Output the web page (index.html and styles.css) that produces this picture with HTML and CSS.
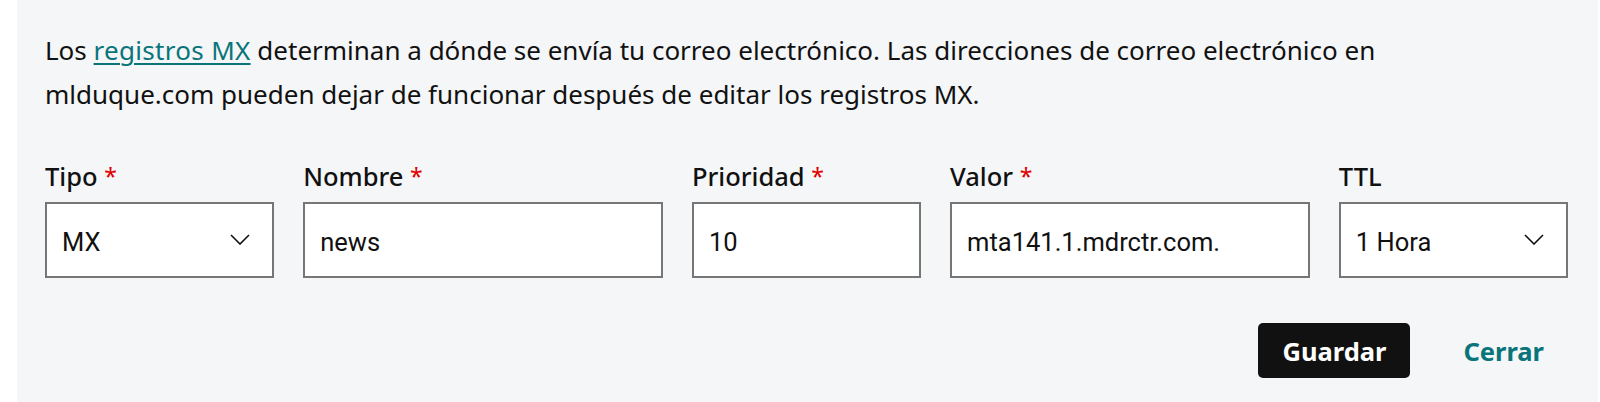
FILE: index.html
```html
<!DOCTYPE html>
<html lang="es">
<head>
<meta charset="utf-8">
<title>Editar registro MX</title>
<link rel="stylesheet" href="styles.css">
</head>
<body>
<div class="panel">
  <p class="intro">Los <a href="#" class="link">registros MX</a> determinan a dónde se envía tu correo electrónico. Las direcciones de correo electrónico en mlduque.com pueden dejar de funcionar después de editar los registros MX.</p>
  <div class="fields">
    <div class="field">
      <div class="label">Tipo <span class="req">*</span></div>
      <div class="box select"><span class="val">MX</span>
        <svg class="chev" viewBox="0 0 20 11" width="20" height="11"><path d="M1 1 L10 10 L19 1" fill="none" stroke="#111" stroke-width="1.6"/></svg>
      </div>
    </div>
    <div class="field">
      <div class="label">Nombre <span class="req">*</span></div>
      <div class="box"><span class="val">news</span></div>
    </div>
    <div class="field">
      <div class="label">Prioridad <span class="req">*</span></div>
      <div class="box"><span class="val">10</span></div>
    </div>
    <div class="field">
      <div class="label">Valor <span class="req">*</span></div>
      <div class="box"><span class="val">mta141.1.mdrctr.com.</span></div>
    </div>
    <div class="field">
      <div class="label">TTL</div>
      <div class="box select"><span class="val">1 Hora</span>
        <svg class="chev" viewBox="0 0 20 11" width="20" height="11"><path d="M1 1 L10 10 L19 1" fill="none" stroke="#111" stroke-width="1.6"/></svg>
      </div>
    </div>
  </div>
  <div class="actions">
    <button class="btn-primary">Guardar</button>
    <button class="btn-link">Cerrar</button>
  </div>
</div>
</body>
</html>
```
FILE: styles.css
```css
* { box-sizing: border-box; }
html, body { margin: 0; padding: 0; background: #fff; }
body { font-family: "Noto Sans", "Open Sans", sans-serif; color: #111; }
.panel {
  margin-left: 17px;
  width: 1581px;
  background: #f5f6f8;
  height: 402px;
  padding: 28px 30px 0 28px;
}
.intro {
  margin: 0;
  font-size: 26px;
  line-height: 44px;
  max-width: 1500px;
}
.link {
  color: #09757a;
  text-decoration: underline;
  text-underline-offset: 3px;
  text-decoration-thickness: 1.5px;
  letter-spacing: 0.3px;
}
.fields {
  margin-top: 43px;
  display: grid;
  grid-template-columns: 1fr 1.57fr 1fr 1.57fr 1fr;
  column-gap: 29px;
}
.label {
  font-size: 25.5px;
  font-weight: 500;
  line-height: 34px;
  margin-bottom: 9px;
}
.req {
  color: #e20000;
  font-weight: 400;
  font-size: 23px;
  vertical-align: 1px;
}
.box {
  height: 76px;
  border: 2px solid #767676;
  background: #fff;
  display: flex;
  align-items: center;
  justify-content: space-between;
  padding: 3px 22px 0 15px;
  font-family: "Roboto", "Liberation Sans", sans-serif;
  font-size: 25.5px;
  color: #111;
}
.chev { display: block; margin-top: -5px; }
.actions {
  margin-top: 45px;
  display: flex;
  justify-content: flex-end;
  align-items: center;
  gap: 29px;
}
.btn-primary {
  font-family: "Noto Sans", sans-serif;
  font-weight: 700;
  font-size: 25.5px;
  color: #fff;
  background: #111;
  border: 0;
  border-radius: 5px;
  width: 152px;
  height: 55px;
  padding: 0;
}
.btn-link {
  font-family: "Noto Sans", sans-serif;
  font-weight: 700;
  font-size: 25.5px;
  color: #09757a;
  background: none;
  border: 0;
  padding: 0 24px;
}
```
